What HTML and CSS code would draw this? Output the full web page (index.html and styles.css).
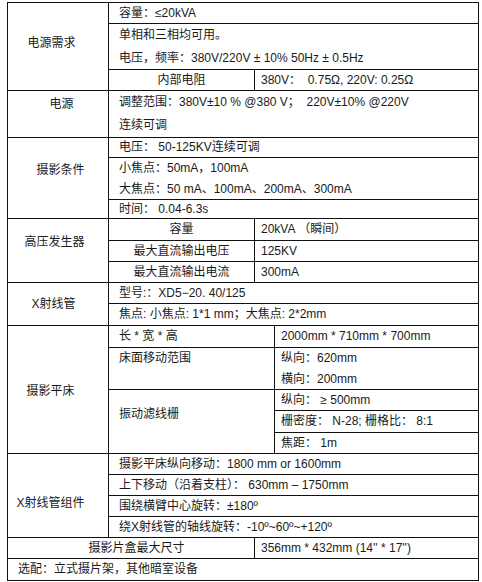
FILE: index.html
```html
<!DOCTYPE html>
<html lang="zh-CN">
<head>
<meta charset="utf-8">
<title>技术参数</title>
<link rel="stylesheet" href="styles.css">
</head>
<body>
<div class="page">
<table class="spec">
  <colgroup>
    <col class="c-a"><col class="c-b"><col class="c-c"><col class="c-d">
  </colgroup>
  <tbody>
    <tr>
      <td class="lbl lbl-psu" rowspan="3">电源需求</td>
      <td class="txt" colspan="3">容量：≤20kVA</td>
    </tr>
    <tr class="two t225">
      <td class="txt" colspan="3"><div class="ln">单相和三相均可用。</div><div class="ln">电压，频率：380V/220V ± 10% 50Hz ± 0.5Hz</div></td>
    </tr>
    <tr>
      <td class="ctr">内部电阻</td>
      <td class="val" colspan="2">380V：&nbsp; 0.75Ω, 220V: 0.25Ω</td>
    </tr>

    <tr class="two t23">
      <td class="lbl lbl-pw">电源</td>
      <td class="txt" colspan="3"><div class="ln">调整范围：380V±10 % @380 V；&nbsp; 220V±10% @220V</div><div class="ln">连续可调</div></td>
    </tr>

    <tr class="l19">
      <td class="lbl lbl-exp" rowspan="3">摄影条件</td>
      <td class="txt" colspan="3">电压：&nbsp;50-125KV连续可调</td>
    </tr>
    <tr class="two t205">
      <td class="txt" colspan="3"><div class="ln">小焦点：50mA，100mA</div><div class="ln">大焦点：50 mA、100mA、200mA、300mA</div></td>
    </tr>
    <tr class="l18">
      <td class="txt" colspan="3">时间：&nbsp;0.04-6.3s</td>
    </tr>

    <tr class="l21">
      <td class="lbl lbl-hv" rowspan="3">高压发生器</td>
      <td class="ctr">容量</td>
      <td class="val" colspan="2">20kVA （瞬间）</td>
    </tr>
    <tr>
      <td class="ctr">最大直流输出电压</td>
      <td class="val" colspan="2">125KV</td>
    </tr>
    <tr>
      <td class="ctr">最大直流输出电流</td>
      <td class="val" colspan="2">300mA</td>
    </tr>

    <tr>
      <td class="lbl lbl-tube" rowspan="2">X射线管</td>
      <td class="txt" colspan="3">型号:：XD5−20. 40/125</td>
    </tr>
    <tr class="l21">
      <td class="txt" colspan="3">焦点: 小焦点: 1*1 mm；大焦点: 2*2mm</td>
    </tr>

    <tr class="l21">
      <td class="lbl lbl-bed" rowspan="5">摄影平床</td>
      <td class="txt" colspan="2">长 * 宽 * 高</td>
      <td class="val">2000mm * 710mm * 700mm</td>
    </tr>
    <tr class="two t205">
      <td class="txt top" colspan="2"><div class="ln">床面移动范围</div></td>
      <td class="val"><div class="ln">纵向：620mm</div><div class="ln">横向：200mm</div></td>
    </tr>
    <tr>
      <td class="txt lbl-grid" colspan="2" rowspan="3">振动滤线栅</td>
      <td class="val">纵向：&nbsp;≥ 500mm</td>
    </tr>
    <tr class="l21">
      <td class="val">栅密度：&nbsp;N-28; 栅格比：&nbsp;8:1</td>
    </tr>
    <tr>
      <td class="val">焦距：&nbsp;1m</td>
    </tr>

    <tr>
      <td class="lbl lbl-asm" rowspan="4">X射线管组件</td>
      <td class="txt" colspan="3">摄影平床纵向移动：1800 mm or 1600mm</td>
    </tr>
    <tr>
      <td class="txt" colspan="3">上下移动（沿着支柱）：&nbsp;630mm – 1750mm</td>
    </tr>
    <tr>
      <td class="txt" colspan="3">围绕横臂中心旋转：±180º</td>
    </tr>
    <tr>
      <td class="txt" colspan="3">绕X射线管的轴线旋转：-10º~60º~+120º</td>
    </tr>

    <tr>
      <td class="ctr ctr-film" colspan="2">摄影片盒最大尺寸</td>
      <td class="val" colspan="2">356mm * 432mm (14'' * 17'')</td>
    </tr>
    <tr class="l21">
      <td class="txt" colspan="4">选配：立式摄片架，其他暗室设备</td>
    </tr>
  </tbody>
</table>
</div>
</body>
</html>
```
FILE: styles.css
```css
html, body {
  margin: 0;
  padding: 0;
  background: #ffffff;
}

.page {
  padding: 2px 0 0 7px;
}

.spec {
  border-collapse: collapse;
  table-layout: fixed;
  width: 471px;
  font-family: "Liberation Sans", "Noto Sans CJK SC", sans-serif;
  font-size: 12px;
  color: #1a1a1a;
  line-height: 20px;
}

.c-a { width: 101px; }
.c-b { width: 146px; }
.c-c { width: 20px; }
.c-d { width: 204px; }

.spec td {
  border: 1px solid #111111;
  padding: 0 0 0 10px;
  vertical-align: middle;
  white-space: nowrap;
  overflow: hidden;
}

.spec td.val {
  padding-left: 6px;
}

.spec td.ctr {
  text-align: center;
  padding: 0;
}

.spec td.ctr-film {
  padding-left: 11px;
}

.spec td.top {
  vertical-align: top;
}

.spec td.lbl {
  text-align: center;
  padding: 0;
}

.spec td.lbl-psu { padding-right: 13px; padding-bottom: 8px; }
.spec td.lbl-pw { padding-left: 7px; padding-bottom: 20px; }
.spec td.lbl-exp { padding-left: 5px; padding-bottom: 16px; }
.spec td.lbl-hv { padding-right: 7px; padding-bottom: 16px; }
.spec td.lbl-tube { padding-right: 9px; }
.spec td.lbl-bed { padding-right: 15px; padding-top: 4px; }
.spec td.lbl-asm { padding-right: 15px; padding-top: 14px; }
.spec td.lbl-grid { padding-bottom: 16px; }

.l18 td { line-height: 18px; }
.l19 td { line-height: 19px; }
.l21 td { line-height: 21px; }

.t225 .ln { line-height: 22.5px; }
.t23 .ln { line-height: 23px; }
.t205 .ln { line-height: 20.5px; }
```
